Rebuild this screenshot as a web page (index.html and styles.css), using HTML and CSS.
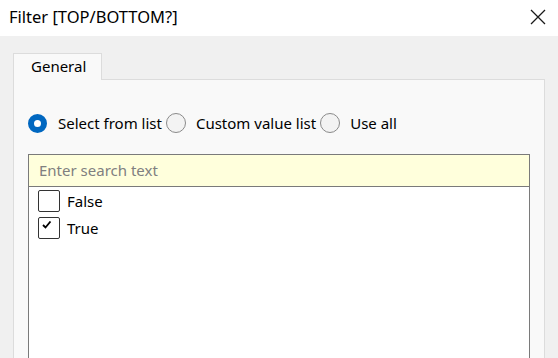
FILE: index.html
```html
<!DOCTYPE html>
<html lang="en">

<head>
    <meta charset="UTF-8">
    <meta name="viewport" content="width=device-width, initial-scale=1.0">
    <title>Filter</title>
    <link rel="stylesheet" href="styles.css">
</head>

<body>
    <div class="titlebar">
        <span class="title">Filter [TOP/BOTTOM?]</span>
        <svg class="close" width="16" height="16" viewBox="0 0 16 16">
            <path d="M1 1 L15 15 M15 1 L1 15" stroke="#1a1a1a" stroke-width="1.3" fill="none" />
        </svg>
    </div>
    <div class="content">
        <div class="tabs">
            <div class="tab">General</div>
        </div>
        <div class="panel">
            <div class="options">
                <label class="option">
                    <span class="radio checked"></span>
                    <span>Select from list</span>
                </label>
                <label class="option">
                    <span class="radio"></span>
                    <span>Custom value list</span>
                </label>
                <label class="option">
                    <span class="radio"></span>
                    <span>Use all</span>
                </label>
            </div>
            <div class="list">
                <div class="search">Enter search text</div>
                <div class="items">
                    <div class="item">
                        <span class="check"></span>
                        <span>False</span>
                    </div>
                    <div class="item">
                        <span class="check">
                            <svg width="10" height="8" viewBox="0 0 10 8">
                                <path d="M1 4 L3.5 6.5 L8.5 0.5" stroke="#000" stroke-width="1.8" fill="none" />
                            </svg>
                        </span>
                        <span>True</span>
                    </div>
                </div>
            </div>
        </div>
    </div>
</body>

</html>
```

FILE: styles.css
```css
* {
    box-sizing: border-box;
    padding: 0;
    margin: 0;
}

html,
body {
    width: 100%;
    height: 100%;
    overflow: hidden;
}

body {
    display: flex;
    flex-direction: column;
    background: #f0f0f0;
    font-family: "Noto Sans", "Open Sans", sans-serif;
    font-size: 15px;
    color: #000;
}

.titlebar {
    height: 36px;
    flex: none;
    background: #fff;
    display: flex;
    align-items: center;
    justify-content: space-between;
    padding: 0 12px 4px 9px;
}

.title {
    font-size: 16.5px;
}

.close {
    display: block;
    margin-top: 2px;
}

.content {
    flex: 1;
    display: flex;
    flex-direction: column;
    padding: 17px 13px 0 13px;
}

.tabs {
    display: flex;
    margin-bottom: -1px;
}

.tab {
    width: 89px;
    height: 27px;
    background: #f9f9f9;
    border: 1px solid #dcdcdc;
    border-bottom: none;
    padding: 2px 0 0 17px;
    position: relative;
    z-index: 1;
}

.panel {
    flex: 1;
    display: flex;
    flex-direction: column;
    background: #f9f9f9;
    border: 1px solid #dcdcdc;
    border-bottom: none;
    padding: 32px 14px 0 14px;
}

.options {
    display: flex;
    align-items: center;
    height: 22px;
}

.option {
    display: flex;
    align-items: center;
    margin-right: 4px;
}

.radio {
    width: 20px;
    height: 20px;
    border-radius: 50%;
    border: 1px solid #8a8a8a;
    background: #f3f3f3;
    margin-right: 10px;
}

.radio.checked {
    width: 19px;
    height: 19px;
    border: 6px solid #0067c0;
    background: #fff;
    margin-right: 11px;
}

.list {
    flex: 1;
    margin-top: 20px;
    border: 1px solid #7a7a7a;
    border-bottom: none;
    background: #fff;
    display: flex;
    flex-direction: column;
}

.search {
    height: 32px;
    background: #ffffdc;
    border-bottom: 1px solid #7a7a7a;
    color: #808080;
    padding: 5px 0 0 10px;
}

.items {
    padding: 0 0 0 9px;
}

.item {
    display: flex;
    align-items: center;
    height: 27px;
}

.check {
    width: 22px;
    height: 22px;
    border: 1px solid #333;
    border-radius: 2px;
    margin-right: 7px;
    display: flex;
    align-items: flex-start;
    padding: 3px 0 0 3px;
}
```
